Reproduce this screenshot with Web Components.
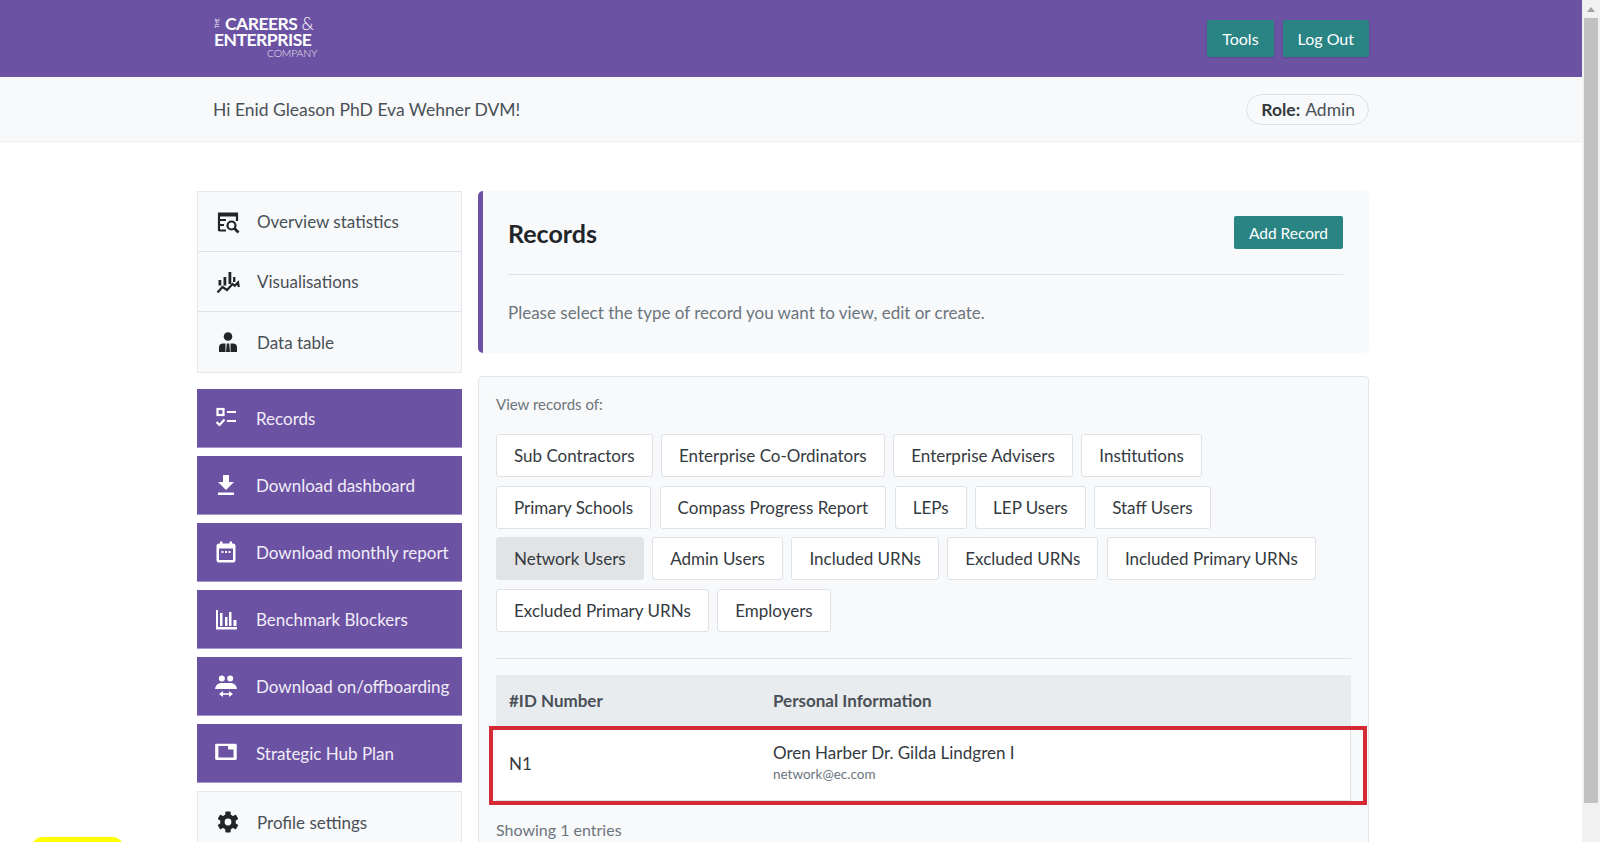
<!DOCTYPE html>
<html lang="en">
<head>
<meta charset="utf-8">
<title>Records</title>
<style>
    html, body { margin: 0; height: 842px; overflow: hidden; background: white; }
    body { font-family: Lato, "Open Sans", sans-serif; color: #343a40; }
    svg { display: block; }
</style>
</head>
<body>

<app-shell>
    <site-header></site-header>
    <greeting-bar name="Hi Enid Gleason PhD Eva Wehner DVM!" role="Admin"></greeting-bar>
    <page-columns>
        <side-menu slot="side">
            <side-group>
                <side-link label="Overview statistics">
                    <svg slot="icon" viewBox="0 0 24 24" width="24" height="24" fill="none" stroke="#212529" stroke-width="2.2">
                        <path d="M3 21V4h18v7" /><path d="M2 4.5h20" stroke-width="4" />
                        <path d="M3 10h7M3 15h5M3 20.500h7" /><circle cx="15.500" cy="15.500" r="4" /><path d="M18.500 18.500l4 4" stroke-width="2.600" />
                    </svg>
                </side-link>
                <side-link label="Visualisations">
                    <svg slot="icon" viewBox="0 0 24 24" width="24" height="24" fill="#212529">
                        <rect x="2.500" y="10" width="2.800" height="5.500" /><rect x="7.500" y="7" width="2.800" height="8.500" />
                        <rect x="12.500" y="2" width="2.800" height="12" /><rect x="17" y="7" width="2.400" height="5" />
                        <path d="M1.500 22.500l5-5.500 4.500 3 5.500-6 2.200 1.800 3.300-3.300.8 4.500" fill="none" stroke="#212529" stroke-width="2.200" />
                    </svg>
                </side-link>
                <side-link label="Data table">
                    <svg slot="icon" viewBox="0 0 24 24" width="24" height="24" fill="#212529">
                        <circle cx="12" cy="6.500" r="4.300" />
                        <path d="M3 22v-4.500a4 4 0 0 1 4-4h2.500V22zM21 22v-4.500a4 4 0 0 0-4-4h-2.500V22zM10.800 13.500h2.400l.8 8.500h-4z" />
                    </svg>
                </side-link>
            </side-group>
            <side-button label="Records">
                <svg slot="icon" viewBox="0 0 24 24" width="24" height="24" fill="none" stroke="#fff" stroke-width="2.200">
                    <rect x="3.500" y="3" width="6" height="6" /><path d="M2.500 16l3 3 5-5.500M13 6h9M13 15h9" />
                </svg>
            </side-button>
            <side-button label="Download dashboard">
                <svg slot="icon" viewBox="0 0 24 24" width="24" height="24" fill="#fff">
                    <path d="M9 2h6v7h5l-8 8-8-8h5z" /><rect x="4" y="19.500" width="16" height="2.500" />
                </svg>
            </side-button>
            <side-button label="Download monthly report">
                <svg slot="icon" viewBox="0 0 24 24" width="24" height="24" fill="#fff">
                    <rect x="2.500" y="3.500" width="19" height="19" rx="2.500" /><rect x="6" y="1.500" width="2.500" height="4" /><rect x="15.500" y="1.500" width="2.500" height="4" />
                    <rect x="5" y="8.500" width="14" height="11.500" fill="#6b52a3" /><rect x="7.500" y="11" width="2" height="2" /><rect x="11" y="11" width="2" height="2" /><rect x="14.500" y="11" width="2" height="2" />
                </svg>
            </side-button>
            <side-button label="Benchmark Blockers">
                <svg slot="icon" viewBox="0 0 24 24" width="24" height="24" fill="#fff">
                    <path d="M2 3h2v17h19v2.500H2z" /><rect x="6" y="6" width="2.500" height="13" /><rect x="11" y="10" width="2.500" height="9" /><rect x="15" y="5" width="2.500" height="14" /><rect x="19.500" y="13" width="3" height="6" />
                </svg>
            </side-button>
            <side-button label="Download on/offboarding">
                <svg slot="icon" viewBox="0 0 24 24" width="24" height="24" fill="#fff">
                    <circle cx="7.800" cy="4.500" r="3" /><circle cx="16.200" cy="4.500" r="3" />
                    <path d="M1 15c.5-4 3.500-6 6.500-6h9c3 0 6 2 6.500 6z" />
                    <path d="M7 20h10" stroke="#fff" stroke-width="1.600" /><path d="M9 17l-4 3 4 3zM15 17l4 3-4 3z" />
                </svg>
            </side-button>
            <side-button label="Strategic Hub Plan">
                <svg slot="icon" viewBox="0 0 24 24" width="24" height="24" fill="#fff" fill-rule="evenodd">
                    <path d="M2 3.500a1.500 1.500 0 0 1 1.500-1.500h17a1.500 1.500 0 0 1 1.500 1.500v17a1.500 1.500 0 0 1-1.500 1.500h-17a1.500 1.500 0 0 1-1.500-1.500zM5 5v14h14V9h-5V5z" transform="translate(-1 1) scale(1.080 .82)" />
                </svg>
            </side-button>
            <side-group>
                <side-link label="Profile settings">
                    <svg slot="icon" viewBox="0 0 24 24" width="24" height="24" fill="#212529">
                        <rect x="9.300" y="1.500" width="5.400" height="21" rx="1" /><rect x="9.300" y="1.500" width="5.400" height="21" rx="1" transform="rotate(60 12 12)" />
                        <rect x="9.300" y="1.500" width="5.400" height="21" rx="1" transform="rotate(120 12 12)" />
                        <circle cx="12" cy="12" r="7.800" /><circle cx="12" cy="12" r="3.400" fill="#f8f9fa" />
                    </svg>
                </side-link>
            </side-group>
        </side-menu>
        <title-card heading="Records" action="Add Record" text="Please select the type of record you want to view, edit or create."></title-card>
        <records-card>
            <filter-chip>Sub Contractors</filter-chip>
            <filter-chip>Enterprise Co-Ordinators</filter-chip>
            <filter-chip>Enterprise Advisers</filter-chip>
            <filter-chip>Institutions</filter-chip>
            <filter-chip>Primary Schools</filter-chip>
            <filter-chip>Compass Progress Report</filter-chip>
            <filter-chip>LEPs</filter-chip>
            <filter-chip>LEP Users</filter-chip>
            <filter-chip>Staff Users</filter-chip>
            <filter-chip active>Network Users</filter-chip>
            <filter-chip>Admin Users</filter-chip>
            <filter-chip>Included URNs</filter-chip>
            <filter-chip>Excluded URNs</filter-chip>
            <filter-chip>Included Primary URNs</filter-chip>
            <filter-chip>Excluded Primary URNs</filter-chip>
            <filter-chip>Employers</filter-chip>
        </records-card>
    </page-columns>
</app-shell>

<script>
class AppShell extends HTMLElement {
    constructor() {
        super();
        this.shadow = this.attachShadow({mode: 'open'});
    }

    connectedCallback() {
        this.shadow.innerHTML = `
        <style>
            :host{ display: flex; height: 842px; overflow: hidden; position: relative; }
            .contenido{ width: 1582px; flex: none; }
            .barra{ width: 18px; flex: none; background: #f1f1f1; box-sizing: border-box; padding: 0 2px; }
            .flecha{ height: 18px; display: flex; align-items: center; justify-content: center; }
            .flecha i{ border: 4px solid transparent; border-top: 0; border-bottom: 5px solid #a3a3a3; }
            .pulgar{ height: 785px; background: #c1c1c1; }
            .amarillo{ position: absolute; left: 32px; top: 837px; width: 91px; height: 20px; border-radius: 10px; background: #ffff00; }
        </style>
        <div class="contenido"><slot></slot></div>
        <div class="barra"><div class="flecha"><i></i></div><div class="pulgar"></div></div>
        <div class="amarillo"></div>
        `;
    }
}

class SiteHeader extends HTMLElement {
    constructor() {
        super();
        this.shadow = this.attachShadow({mode: 'open'});
    }

    connectedCallback() {
        this.shadow.innerHTML = `
        <style>
            :host{ display: flex; height: 77px; background: #6b52a3; padding: 0 213px 0 214px; align-items: center; justify-content: space-between; }
            .logo{ color: white; width: 103px; height: 44px; margin-top: -1px; font-weight: 700; font-size: 17.5px; line-height: 16px; letter-spacing: -0.5px; }
            .fila{ display: flex; white-space: nowrap; }
            .the{ writing-mode: vertical-rl; transform: rotate(180deg); font-size: 5px; line-height: 7px; font-weight: 400; letter-spacing: 0; width: 7px; margin-right: 4px; height: 14px; text-align: center; }
            .amp{ font-weight: 300; margin-left: 4px; }
            .compania{ font-weight: 300; font-size: 10.5px; line-height: 11px; text-align: right; letter-spacing: -0.2px; opacity: .85; }
            .botones{ display: flex; gap: 9px; }
            button{ font: 400 16px Lato, sans-serif; color: white; background: #2a8484; border: 0; border-radius: 2px; height: 37px; padding: 0 15px; box-shadow: 0 1px 2px rgba(0,0,0,.15); }
        </style>
        <div class="logo">
            <div class="fila"><span class="the">THE</span>CAREERS<span class="amp">&amp;</span></div>
            <div class="fila">ENTERPRISE</div>
            <div class="compania">COMPANY</div>
        </div>
        <div class="botones"><button>Tools</button><button>Log Out</button></div>
        `;
    }
}

class GreetingBar extends HTMLElement {
    constructor() {
        super();
        this.shadow = this.attachShadow({mode: 'open'});
    }

    connectedCallback() {
        const name = this.getAttribute('name');
        const role = this.getAttribute('role');
        this.shadow.innerHTML = `
        <style>
            :host{ display: flex; height: 65px; box-sizing: border-box; background: #f8f9fa; border-bottom: 1px solid #eceef0; padding: 0 213px; align-items: center; justify-content: space-between; font-size: 17.5px; color: #495057; }
            .pildora{ display: flex; gap: 5px; align-items: center; height: 31px; box-sizing: border-box; padding: 0 13px 0 14px; border: 1px solid #dee2e6; border-radius: 16px; }
            b{ font-weight: 700; color: #343a40; font-size: 17.5px; }
        </style>
        <span>${name}</span>
        <span class="pildora"><b>Role:</b> ${role}</span>
        `;
    }
}

class PageColumns extends HTMLElement {
    constructor() {
        super();
        this.shadow = this.attachShadow({mode: 'open'});
    }

    connectedCallback() {
        this.shadow.innerHTML = `
        <style>
            :host{ display: grid; grid-template-columns: 265px 891px; column-gap: 16px; padding: 49px 0 0 197px; align-items: start; }
            .lado{ grid-row: 1; }
            .principal{ grid-column: 2; grid-row: 1; display: flex; flex-direction: column; gap: 23px; }
        </style>
        <div class="lado"><slot name="side"></slot></div>
        <div class="principal"><slot></slot></div>
        `;
    }
}

class SideMenu extends HTMLElement {
    constructor() {
        super();
        this.shadow = this.attachShadow({mode: 'open'});
    }

    connectedCallback() {
        this.shadow.innerHTML = `
        <style>
            :host{ display: flex; flex-direction: column; gap: 8.4px; }
            ::slotted(side-group){ margin-bottom: 8px; }
        </style>
        <slot></slot>
        `;
    }
}

class SideGroup extends HTMLElement {
    constructor() {
        super();
        this.shadow = this.attachShadow({mode: 'open'});
    }

    connectedCallback() {
        this.shadow.innerHTML = `
        <style>
            :host{ display: block; border: 1px solid #e6e8eb; background: #f8f9fa; }
            ::slotted(side-link:not(:last-child)){ border-bottom: 1px solid #e0e3e6; }
        </style>
        <slot></slot>
        `;
    }
}

class SideLink extends HTMLElement {
    constructor() {
        super();
        this.shadow = this.attachShadow({mode: 'open'});
    }

    connectedCallback() {
        const label = this.getAttribute('label');
        this.shadow.innerHTML = `
        <style>
            :host{ display: flex; box-sizing: border-box; height: 60px; align-items: center; padding-left: 18px; gap: 17px; font-size: 17px; color: #495057; }
        </style>
        <slot name="icon"></slot>
        <span>${label}</span>
        `;
    }
}

class SideButton extends HTMLElement {
    constructor() {
        super();
        this.shadow = this.attachShadow({mode: 'open'});
    }

    connectedCallback() {
        const label = this.getAttribute('label');
        this.shadow.innerHTML = `
        <style>
            :host{ display: flex; box-sizing: border-box; height: 58.6px; align-items: center; padding-left: 17px; gap: 18px; font-size: 17px; color: #f1edf8; background: #6b52a3; border-bottom: 1px solid #a594cb; }
        </style>
        <slot name="icon"></slot>
        <span>${label}</span>
        `;
    }
}

class TitleCard extends HTMLElement {
    constructor() {
        super();
        this.shadow = this.attachShadow({mode: 'open'});
    }

    connectedCallback() {
        this.shadow.innerHTML = `
        <style>
            :host{ display: block; box-sizing: border-box; height: 162px; background: #f8f9fa; border-left: 5px solid #6b52a3; border-radius: 5px; padding: 25px 26px 0 25px; }
            .fila{ display: flex; justify-content: space-between; align-items: center; height: 33px; padding-bottom: 25px; border-bottom: 1px solid #e0e3e6; }
            h1{ margin: 0; font-size: 25px; font-weight: 700; color: #212529; }
            button{ font: 400 15.5px Lato, sans-serif; color: white; background: #2a8484; border: 0; border-radius: 2px; height: 33px; width: 109px; padding: 0; }
            p{ margin: 27px 0 0; font-size: 17px; color: #6c757d; }
        </style>
        <div class="fila"><h1>${this.getAttribute('heading')}</h1><button>${this.getAttribute('action')}</button></div>
        <p>${this.getAttribute('text')}</p>
        `;
    }
}

class FilterChip extends HTMLElement {
    constructor() {
        super();
        this.shadow = this.attachShadow({mode: 'open'});
    }

    connectedCallback() {
        this.shadow.innerHTML = `
        <style>
            :host{ display: flex; box-sizing: border-box; height: 43px; align-items: center; padding: 0 17px; background: white; border: 1px solid #dee2e6; border-radius: 3px; font-size: 17px; color: #343a40; white-space: nowrap; }
            :host([active]){ background: #e2e3e5; border-color: #e2e3e5; }
        </style>
        <slot></slot>
        `;
    }
}

class RecordsCard extends HTMLElement {
    constructor() {
        super();
        this.shadow = this.attachShadow({mode: 'open'});
    }

    connectedCallback() {
        this.shadow.innerHTML = `
        <style>
            :host{ display: block; box-sizing: border-box; background: #f8f9fa; border: 1px solid #e3e6ea; border-radius: 4px; padding: 17px 17px 0; height: 480px; }
            .rotulo{ font-size: 15px; color: #6c757d; line-height: 20px; margin-bottom: 20px; }
            .chips{ display: flex; flex-wrap: wrap; gap: 8.5px; width: 840px; }
            hr{ border: 0; border-top: 1px solid #e0e3e6; margin: 26px 0 16px; }
            .cabecera, .fila{ display: grid; grid-template-columns: 264px 1fr; padding-left: 13px; }
            .cabecera{ height: 52px; align-items: center; background: #e9ecef; font-size: 17px; font-weight: 700; color: #495057; }
            .fila{ position: relative; height: 73px; align-items: center; background: white; border-bottom: 1px solid #dee2e6; border-right: 1px solid #dee2e6; font-size: 17px; color: #343a40; }
            .nombre{ line-height: 22px; }
            small{ display: block; font-size: 13.5px; color: #6c757d; line-height: 20px; }
            .marca{ position: absolute; left: -7px; right: -17px; top: -1px; bottom: -5px; border: 4px solid #d32a36; }
            .pie{ margin-top: 19px; font-size: 16px; color: #6c757d; }
        </style>
        <div class="rotulo">View records of:</div>
        <div class="chips"><slot></slot></div>
        <hr>
        <div class="cabecera"><span>#ID Number</span><span>Personal Information</span></div>
        <div class="fila">
            <span>N1</span>
            <span class="nombre">Oren Harber Dr. Gilda Lindgren I<small>network@ec.com</small></span>
            <div class="marca"></div>
        </div>
        <div class="pie">Showing 1 entries</div>
        `;
    }
}

customElements.define('app-shell', AppShell);
customElements.define('site-header', SiteHeader);
customElements.define('greeting-bar', GreetingBar);
customElements.define('page-columns', PageColumns);
customElements.define('side-menu', SideMenu);
customElements.define('side-group', SideGroup);
customElements.define('side-link', SideLink);
customElements.define('side-button', SideButton);
customElements.define('title-card', TitleCard);
customElements.define('filter-chip', FilterChip);
customElements.define('records-card', RecordsCard);
</script>
</body>
</html>
